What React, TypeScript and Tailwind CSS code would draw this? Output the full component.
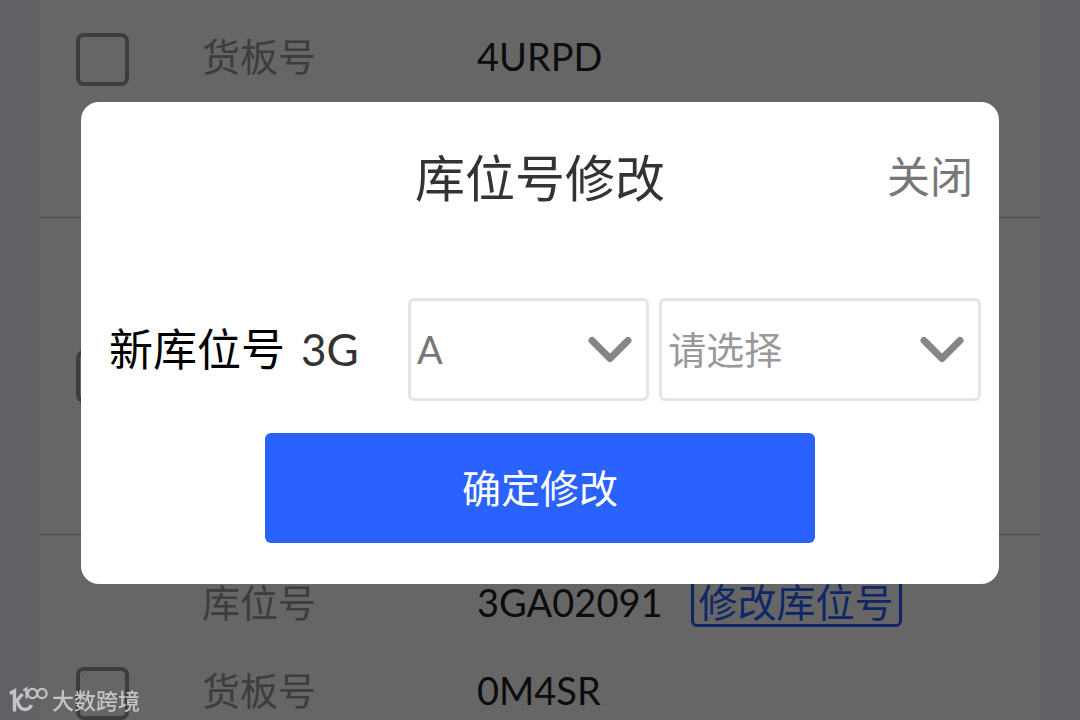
import { useState, type ReactNode } from "react";

type Field = { label: string; value: string; action?: string };
type Item = { id: string; fields: Field[] };

const items: Item[] = [
  { id: "4URPD", fields: [{ label: "货板号", value: "4URPD" }] },
  { id: "blank", fields: [] },
  {
    id: "0M4SR",
    fields: [
      { label: "库位号", value: "3GA02091", action: "修改库位号" },
      { label: "货板号", value: "0M4SR" },
    ],
  },
];

function ListItem({ item }: { item: Item }) {
  return (
    <li className="flex h-[317px] items-center border-b border-[#bbb] pl-9">
      <input
        type="checkbox"
        aria-label={item.id}
        className="size-[53px] shrink-0 appearance-none rounded-lg border-4 border-[#999] checked:bg-[#2962ff]"
      />
      <dl
        className={
          item.fields.length === 1
            ? "mb-[6px] ml-[73px] flex-1 text-[38px] leading-[88px]"
            : "mb-[94px] ml-[73px] flex-1 text-[38px] leading-[88px]"
        }
      >
        {item.fields.map((f) => (
          <div key={f.label} className="flex h-[88px] items-center">
            <dt className="w-[275px] text-[#999]">{f.label}</dt>
            <dd className="flex items-center gap-7 text-[#222]">
              {f.value}
              {f.action && (
                <button
                  type="button"
                  className="flex h-[50px] items-center rounded-md border-3 border-[#2962ff] px-[5px] text-[39px] leading-none text-[#2962ff]"
                >
                  {f.action}
                </button>
              )}
            </dd>
          </div>
        ))}
      </dl>
    </li>
  );
}

function Select({
  label,
  value,
  onChange,
  className,
  children,
}: {
  label: string;
  value: string;
  onChange: (v: string) => void;
  className: string;
  children: ReactNode;
}) {
  return (
    <div className={"relative " + className}>
      <select
        aria-label={label}
        value={value}
        onChange={(e) => onChange(e.target.value)}
        className="h-[103px] w-full appearance-none rounded-md border-3 border-[#e5e5e5] bg-white pr-16 pl-[6px] text-[38px] text-inherit outline-none"
      >
        {children}
      </select>
      <svg
        viewBox="0 0 44 28"
        className="pointer-events-none absolute top-[38px] right-[17px] h-7 w-11"
        fill="none"
        stroke="#868686"
        strokeWidth="7"
        strokeLinecap="round"
        strokeLinejoin="round"
      >
        <path d="M4 4.5 22 22.5 40 4.5" />
      </svg>
    </div>
  );
}

function Watermark() {
  return (
    <div className="fixed bottom-1 left-2 flex items-center gap-1 text-[22px] leading-[30px] font-medium text-[#c4c4c6]">
      <svg viewBox="0 0 40 30" className="h-[30px] w-10" fill="none" stroke="currentColor">
        <path d="M2 7.500 6.500 5V25.500" strokeWidth="3.400" />
        <path d="M14.500 8 9 14.500C10.500 20 13.500 23.500 17 23.500C20 23.500 22 22 23.500 19" strokeWidth="3.400" />
        <path d="M15.500 4.500 18.500 2.500V12.500" strokeWidth="2.200" />
        <circle cx="24.500" cy="7.500" r="4.600" strokeWidth="2.200" />
        <circle cx="34" cy="7.500" r="4.600" strokeWidth="2.200" />
      </svg>
      <span>大数跨境</span>
    </div>
  );
}

export default function App() {
  const [zone, setZone] = useState("A");
  const [slot, setSlot] = useState("");

  return (
    <div className="h-screen overflow-hidden bg-[#f1f4ff] px-10 font-[Lato,'Noto_Sans_CJK_SC',sans-serif]">
      <ul className="-mt-[99px] bg-white">
        {items.map((item) => (
          <ListItem key={item.id} item={item} />
        ))}
      </ul>

      <div className="fixed inset-0 flex items-start justify-center bg-black/60 pt-[102px]">
        <section
          role="dialog"
          aria-modal="true"
          aria-labelledby="dialog-title"
          className="w-[85%] rounded-[18px] bg-white pb-[41px]"
        >
          <header className="grid grid-cols-[1fr_auto_1fr] items-center pt-[39px] pr-[26px]">
            <h2
              id="dialog-title"
              className="col-start-2 pl-[26px] text-[50px] leading-[74px] text-[#333]"
            >
              库位号修改
            </h2>
            <button type="button" className="justify-self-end pb-[2px] text-[43px] text-[#777]">
              关闭
            </button>
          </header>

          <div className="mt-[83px] flex items-center pr-[18px] pl-7">
            <div className="flex w-[299px] shrink-0 items-center gap-4 pb-[2px] text-[44px] text-black">
              <span>新库位号</span>
              <span className="text-[#333]">3G</span>
            </div>
            <div className="flex flex-1 gap-[10px]">
              <Select label="库区" value={zone} onChange={setZone} className="flex-3 text-[#777]">
                <option value="A">A</option>
              </Select>
              <Select label="库位" value={slot} onChange={setSlot} className="flex-4 text-[#999]">
                <option value="">请选择</option>
              </Select>
            </div>
          </div>

          <button
            type="button"
            className="mx-auto mt-8 block h-[110px] w-[60%] rounded-md bg-[#2962ff] text-[39px] text-white"
          >
            确定修改
          </button>
        </section>
      </div>

      <Watermark />
    </div>
  );
}
